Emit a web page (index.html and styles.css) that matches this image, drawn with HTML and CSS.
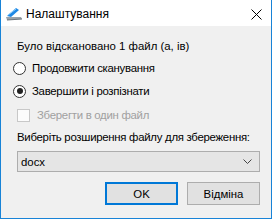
FILE: index.html
```html
<!DOCTYPE html>
<html>
<head>
<meta charset="utf-8">
<link rel="stylesheet" href="styles.css">
</head>
<body>
<div class="dialog">
  <div class="titlebar">
    <svg class="app-icon" width="18" height="14" viewBox="0 0 18 14">
      <path d="M2 9 L11 1 L14 3 L6 10 Z" fill="#1e88e5"/>
      <path d="M3 8 L11 2" stroke="#8fd0ff" stroke-width="1"/>
      <path d="M1 10 L16 10 L17 12 L2 13 Z" fill="#9aa3ab"/>
      <path d="M2 13 L17 12" stroke="#6b747c" stroke-width="1"/>
    </svg>
    <span class="title">Налаштування</span>
    <svg class="close" width="11" height="11" viewBox="0 0 11 11">
      <path d="M0.5 0.5 L10.5 10.5 M10.5 0.5 L0.5 10.5" stroke="#000" stroke-width="1"/>
    </svg>
  </div>
  <div class="content">
    <div class="row">Було відскановано 1 файл (а, ів)</div>
    <div class="row radio-row tight"><span class="radio"></span>Продовжити сканування</div>
    <div class="row radio-row tight"><span class="radio checked"></span>Завершити і розпізнати</div>
    <div class="row check-row disabled tight"><span class="check"></span>Зберегти в один файл</div>
    <div class="row tight">Виберіть розширення файлу для збереження:</div>
    <div class="combo">
      <span>docx</span>
      <svg width="9" height="5" viewBox="0 0 9 5"><path d="M0.5 0.5 L4.5 4.5 L8.5 0.5" stroke="#444" fill="none" stroke-width="1"/></svg>
    </div>
    <div class="buttons">
      <div class="btn default">OK</div>
      <div class="btn">Відміна</div>
    </div>
  </div>
</div>
</body>
</html>
```

FILE: styles.css
```css
html, body {
  margin: 0;
  padding: 0;
}
body {
  width: 272px;
  height: 219px;
  overflow: hidden;
  font-family: "Liberation Sans", Arial, sans-serif;
  font-size: 11.4px;
  color: #000;
}
.dialog {
  width: 272px;
  height: 219px;
  box-sizing: border-box;
  border: 1px solid #1883d7;
  border-top: none;
  background: #f0f0f0;
  display: flex;
  flex-direction: column;
}
.titlebar {
  height: 26px;
  background: #fff;
  display: flex;
  align-items: center;
  padding-left: 4px;
  padding-right: 9px;
}
.app-icon {
  margin-right: 3px;
  margin-top: 1px;
}
.title {
  flex: 1;
  font-size: 12px;
  margin-top: 1px;
}
.close {
  margin-top: 2px;
}
.content {
  padding: 9px 11px 0 16px;
  display: flex;
  flex-direction: column;
}
.row {
  height: 22px;
  display: flex;
  align-items: center;
  white-space: nowrap;
}
.tight {
  letter-spacing: -0.28px;
}
.radio-row {
  margin-left: -4px;
}
.radio {
  width: 11px;
  height: 11px;
  border: 1px solid #333;
  border-radius: 50%;
  background: #fff;
  margin-right: 6px;
  position: relative;
  flex: none;
}
.radio.checked::after {
  content: "";
  position: absolute;
  left: 2.5px;
  top: 2.5px;
  width: 6px;
  height: 6px;
  border-radius: 50%;
  background: #222;
}
.radio-row + .radio-row {
  margin-top: 1px;
}
.check-row {
  margin-top: 2px;
}
.check {
  width: 11px;
  height: 11px;
  border: 1px solid #c8c8c8;
  background: #fcfcfc;
  margin-right: 7px;
  flex: none;
}
.disabled {
  color: #a0a0a0;
}
.combo {
  margin-top: 3px;
  height: 21px;
  box-sizing: border-box;
  width: 243px;
  border: 1px solid #adadad;
  background: #e5e5e5;
  display: flex;
  align-items: center;
  justify-content: space-between;
  padding: 0 7px 0 3px;
}
.buttons {
  margin-top: 10px;
  display: flex;
  justify-content: flex-end;
  gap: 9px;
  width: 243px;
}
.btn {
  width: 73px;
  height: 23px;
  box-sizing: border-box;
  border: 1px solid #adadad;
  background: #e1e1e1;
  display: flex;
  align-items: center;
  justify-content: center;
}
.btn.default {
  border: 2px solid #0078d7;
}
```
